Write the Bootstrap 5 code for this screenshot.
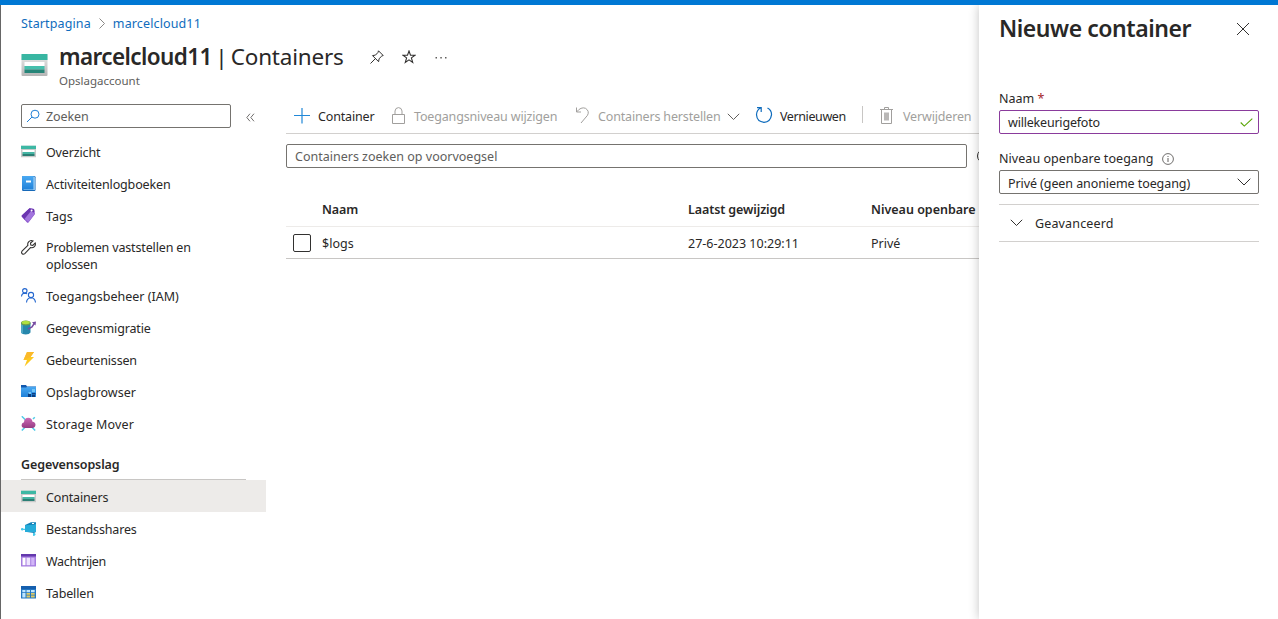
<!DOCTYPE html>
<html lang="nl">
<head>
<meta charset="utf-8">
<meta name="viewport" content="width=device-width, initial-scale=1">
<title>marcelcloud11 | Containers</title>
<link href="https://cdn.jsdelivr.net/npm/bootstrap@5.3.0/dist/css/bootstrap.min.css" rel="stylesheet">
<style>
  body { font-family: "Noto Sans", "Open Sans", sans-serif; font-size: 12.5px; line-height: 17px; color: #292827; height: 619px; overflow: hidden; white-space: nowrap; }
  .topbar { height: 5px; background: #0078d4; flex: none; }
  .blade { border-left: 1px solid #666; min-width: 0; }
  .crumbs { height: 37px; padding: 0 0 0 20px; gap: 8px; letter-spacing: .13px; }
  .crumbs a { color: #0f6cbd; text-decoration: none; }
  .titlebar { height: 50px; padding-left: 20px; }
  .titlebar h1 { font-size: 22.5px; line-height: 30px; font-weight: 400; margin: 0; letter-spacing: -.2px; word-spacing: -2.3px; }
  .titlebar h1 b { font-weight: 600; letter-spacing: -.6px; }
  .subtitle { font-size: 11.5px; line-height: 15px; color: #605e5c; margin-top: 1px; }
  .sidebar { width: 265px; flex: none; letter-spacing: -.15px; }
  .search-box { border: 1px solid #75736f; border-radius: 2px; height: 24px; color: #605e5c; }
  .sidebar .search-box { width: 210px; gap: 5px; padding-left: 4px; letter-spacing: -.1px; }
  .side-item { height: 32px; padding-left: 20px; gap: 10px; }
  .side-item.tall { height: 48px; }
  .side-item svg { width: 15px; height: 15px; flex: none; margin-bottom: 1px; }
  .side-item.tall svg { margin-bottom: 18px; }
  .side-item.current { background: #edebe9; }
  .side-head ~ .side-item { padding-top: 2px; }
  .ls-wide { letter-spacing: .15px; }
  .ls-none { letter-spacing: 0; }
  .side-head { font-weight: 600; margin: 16px 20px 0; height: 24px; border-bottom: 1px solid #c8c6c4; letter-spacing: -.1px; }
  .toolbar { display: grid; grid-template-columns: 97px 185px 179px 107px 18px 120px; height: 35px; padding: 2px 0 1px 8px; margin-top: -5px; border-bottom: 1px solid #d2d0ce; letter-spacing: -.16px; }
  .tool { display: flex; align-items: center; }
  .tool svg { flex: none; }
  .off { color: #a19f9d; }
  .grid-row { display: grid; grid-template-columns: 36px 366px 183px 150px; align-items: center; }
  .grid-head { height: 34px; font-weight: 600; border-bottom: 1px solid #edebe9; margin-top: 25px; letter-spacing: -.1px; }
  .grid-line { height: 32px; border-bottom: 1px solid #c8c6c4; padding-top: 1px; }
  .tick { width: 18px; height: 18px; border: 1px solid #323130; border-radius: 2px; margin: -1px 0 0 7px; }
  .panel { width: 299px; flex: none; padding: 0 19px 0 20px; background: #fff; box-shadow: 0 0 10px rgba(0,0,0,.24); z-index: 2; clip-path: inset(0 0 0 -16px); }
  .panel h2 { font-size: 23px; font-weight: 600; line-height: 30px; margin: -1px 0 1px; letter-spacing: -.45px; }
  .field { height: 24px; border: 1px solid #75736f; border-radius: 2px; padding: 0 5px 0 8px; letter-spacing: -.08px; }
  .field.active { border-color: #8a3b9c; letter-spacing: -.2px; }
  .more { height: 38px; border-top: 1px solid #d2d0ce; border-bottom: 1px solid #d2d0ce; letter-spacing: .15px; }
</style>
</head>
<body class="d-flex flex-column">
<svg width="0" height="0" class="position-absolute" aria-hidden="true">
  <linearGradient id="gGrey" x1="0" x2="0" y1="0" y2="1"><stop offset="0" stop-color="#e9e9e9"/><stop offset="1" stop-color="#b5b5b5"/></linearGradient>
  <linearGradient id="gBlue" x1="0" x2="0" y1="0" y2="1"><stop offset="0" stop-color="#4aa9f2"/><stop offset="1" stop-color="#1f80d8"/></linearGradient>
  <linearGradient id="gPink" x1="0" x2="0" y1="0" y2="1"><stop offset="0" stop-color="#cc6bb5"/><stop offset="1" stop-color="#963d83"/></linearGradient>
  <symbol id="storage" viewBox="0 0 26 22"><path d="M0 1h26v20q0 1-1 1H1q-1 0-1-1z" fill="url(#gGrey)"/><path d="M0 0h26v6H0z" fill="#38b6a2"/><path d="M3 8h20v4H3z" fill="#fff"/><path d="M3 12h20v3.500H3z" fill="#45bfac"/><path d="M3 15.500h20V19H3z" fill="#268578"/></symbol>
  <symbol id="storage-sm" viewBox="0 0 15 12"><path d="M0 0h15v12H0z" fill="#c9c9c9"/><path d="M0 0h15v3.500H0z" fill="#3db8a4"/><path d="M1.500 4.500h12V7h-12z" fill="#fff"/><path d="M1.500 6.500h12v2h-12z" fill="#45b5a4"/><path d="M1.500 8.500h12v2h-12z" fill="#2b7f75"/></symbol>
</svg>
<div class="topbar"></div>
<div class="d-flex flex-grow-1">
  <div class="blade flex-grow-1 overflow-hidden">
    <nav class="crumbs d-flex align-items-center"><a href="#">Startpagina</a>
      <svg width="6" height="11" viewBox="0 0 6 11" fill="none" stroke="#8a8886"><path d="M.5.5l5 5-5 5"/></svg>
      <a href="#">marcelcloud11</a></nav>
    <header class="titlebar d-flex">
      <svg width="27" height="22" style="margin-top:12px"><use href="#storage"/></svg>
      <div style="margin-left:11px">
        <div class="d-flex align-items-center">
          <h1><b>marcelcloud11</b> | Containers</h1>
          <svg style="margin-left:26px" width="14" height="14" viewBox="0 0 14 14" fill="none" stroke="#323130"><path d="M8.500.8l4.700 4.700-1.400.5-2.700 2.700-.5 3L2.500 5.600l3-.5L8 2.400zM5.300 8.700L.5 13.500"/></svg>
          <svg style="margin-left:18px" width="14" height="14" viewBox="0 0 14 14" fill="none" stroke="#323130" stroke-width="1.100"><path d="M7 1l1.500 4.200H13L9.400 7.900l1.300 4.500L7 9.800l-3.700 2.600 1.300-4.500L1 5.200h4.500z"/></svg>
          <svg style="margin-left:19px" width="12" height="3" viewBox="0 0 12 3" fill="#605e5c"><path d="M.5 1H2v1.500H.5zM5.300 1h1.500v1.500H5.300zM10 1h1.500v1.500H10z"/></svg>
        </div>
        <div class="subtitle">Opslagaccount</div>
      </div>
    </header>
    <div class="d-flex" style="padding-top:12px">
      <aside class="sidebar">
        <div class="d-flex align-items-center" style="padding-left:20px;margin-bottom:8px">
          <div class="search-box d-flex align-items-center"><svg width="15" height="14" viewBox="0 0 15 14" fill="none" stroke="#1f7fd6"><circle cx="9" cy="5.200" r="4"/><path d="M6 8L1 13"/></svg><span>Zoeken</span></div>
          <svg style="margin:2px 0 0 15px" width="9" height="9" viewBox="0 0 9 9" fill="none" stroke="#605e5c" stroke-width=".9"><path d="M4 .7L.8 4.500 4 8.300M8 .7L4.800 4.500 8 8.300"/></svg>
        </div>
        <div class="side-item d-flex align-items-center"><svg viewBox="0 0 15 15"><use href="#storage-sm" y="1.500" width="15" height="12"/></svg><span>Overzicht</span></div>
        <div class="side-item d-flex align-items-center"><svg viewBox="0 0 15 15"><rect x="1" y="0" width="13.500" height="15" rx="1.200" fill="#1769b8"/><rect x="2.500" y=".6" width="11.300" height="13.400" fill="#a9d6f8"/><path d="M1 1.200Q1 0 2.200 0H12.500v13.500H2Q1 13.500 1 14z" fill="url(#gBlue)"/><path d="M5 4.500h5v2H5z" fill="#fff"/></svg><span>Activiteitenlogboeken</span></div>
        <div class="side-item d-flex align-items-center"><svg viewBox="0 0 15 15"><path d="M8.500.3L13 1l1 5-6.500 8.400q-.8.7-1.500 0L.9 8.700q-.6-.9.1-1.500z" fill="#8a55cc"/><path d="M8.500.3L13 1l.5 2.500L4 12 .9 8.700q-.6-.9.1-1.500z" fill="#6b35b0"/><path d="M10 3l3.800 2.400L7.500 14 3.500 11z" fill="#a275dd"/><circle cx="10.600" cy="2.500" r="1" fill="#fff"/></svg><span class="ls-none">Tags</span></div>
        <div class="side-item tall d-flex align-items-center"><svg viewBox="0 0 15 15" fill="none" stroke="#323130" stroke-width="1.100"><path d="M12 .9Q9.500-.1 7.600 1.800 6.300 3.300 6.900 5.300L1 11.200q-1 1.500.2 2.600 1.300.9 2.600-.2l5.700-6q2.300.6 3.900-1 1.500-1.700.8-3.700l-2.400 2.400-2-.3-.3-2z"/></svg><span>Problemen vaststellen en<br>oplossen</span></div>
        <div class="side-item d-flex align-items-center"><svg viewBox="0 0 15 15" fill="none" stroke="#2467cf" stroke-width="1.100"><circle cx="3.800" cy="2.800" r="2.200"/><path d="M.5 8.500Q.7 5.200 3.800 5.100q1.500 0 2.300.9"/><circle cx="10" cy="7" r="2.600"/><path d="M5.500 14.500Q5.800 10 10 9.800q4 .2 4.500 4.700"/></svg><span class="ls-none">Toegangsbeheer (IAM)</span></div>
        <div class="side-item d-flex align-items-center"><svg viewBox="0 0 15 15"><path d="M0 2.800v9.700q1 2 4.700 2t4.800-2V2.800z" fill="#2687ac"/><path d="M0 2.800v9.700q.6 1 2 1.500V3z" fill="#4fa6c4"/><ellipse cx="4.800" cy="2.900" rx="4.800" ry="2.500" fill="#6d9a4a"/><ellipse cx="4.800" cy="2.500" rx="4" ry="1.700" fill="#b0e040"/><path d="M7 9l4-2 2.500-4" fill="none" stroke="#764ba2" stroke-width="1.500"/><path d="M11 2.300l4-.9-.5 4z" fill="#764ba2"/></svg><span>Gegevensmigratie</span></div>
        <div class="side-item d-flex align-items-center"><svg viewBox="0 0 15 15"><path d="M6 0h7L9.500 5H13L3.500 14.500 6 8H2.500z" fill="#fcc81f"/><path d="M6 0h7L9.500 5 2.500 8z" fill="#fbb92a"/></svg><span>Gebeurtenissen</span></div>
        <div class="side-item d-flex align-items-center"><svg viewBox="0 0 15 15"><path d="M0 1h5l1 1.500h9V13H0z" fill="#1258ad"/><path d="M0 3.500h5L6.500 2.700H15V13H0z" fill="url(#gBlue)"/><path d="M7 9h3v4H7zM11 9h3.500v1.500H11zM11 11h3v2h-3z" fill="#0c3f82"/><path d="M11 5h3v3h-3zM7.500 8H10v2H7.500z" fill="#70c4f8"/></svg><span style="letter-spacing:.06px">Opslagbrowser</span></div>
        <div class="side-item d-flex align-items-center"><svg viewBox="0 0 15 15"><path d="M.8.3l4 4M14.200 14.500l-4-4M.8 14.500l4-4M12 3l1.800-1.800" stroke="#50cbe8" stroke-width="1.500"/><path d="M3.700 12Q.5 11.800.6 9 .7 6.600 3 6.200 3.300 2 7.300 1.800q3.500 0 4.200 3.900 3 .4 3 3.100-.1 3-3.200 3.200z" fill="url(#gPink)"/></svg><span class="ls-wide">Storage Mover</span></div>
        <div class="side-head">Gegevensopslag</div>
        <div class="side-item current d-flex align-items-center"><svg viewBox="0 0 15 15"><use href="#storage-sm" y="1.500" width="15" height="12"/></svg><span>Containers</span></div>
        <div class="side-item d-flex align-items-center"><svg viewBox="0 0 15 15"><path d="M0 8.300h4M12.800 12v3" stroke="#45c9ea" stroke-width="1.300"/><circle cx="1.200" cy="8.300" r="1.200" fill="#45c9ea"/><circle cx="13.200" cy="13.200" r="1.200" fill="#45c9ea"/><path d="M4 4l6-2.800h5V11l-2 1-9-1.200z" fill="#1683b8"/><path d="M4 4.200l9-.4L15 3v8H4z" fill="#26acd9"/><path d="M11 2h2v1h-2z" fill="#fff"/></svg><span>Bestandsshares</span></div>
        <div class="side-item d-flex align-items-center"><svg viewBox="0 0 15 15"><path d="M0 1.500h15V13q0 .5-.5.5H.5Q0 13.500 0 13z" fill="#a67de0"/><path d="M0 1h15v2.500H0z" fill="#6338ad"/><path d="M1.500 4.700h3v7.500h-3z" fill="#fff"/><path d="M5.500 4.700h3.700v7.500H5.500z" fill="#efe5ff"/><path d="M10.200 4.700h3.300v7.500h-3.300z" fill="#d2b6f8"/></svg><span style="letter-spacing:-.3px">Wachtrijen</span></div>
        <div class="side-item d-flex align-items-center"><svg viewBox="0 0 15 15"><path d="M0 1.500h15V13q0 .5-.5.5H.5Q0 13.500 0 13z" fill="#2376c2"/><path d="M0 1h15v3H0z" fill="#155fae"/><path d="M1.300 5h3.200v2.200H1.300zM5.500 5h3.500v2.200H5.500zM10 5h3.700v2.200H10zM1.300 8h3.200v4.500H1.300z" fill="#bfe6ff"/><path d="M5.500 8h3.500v1.800H5.500zM10 8h3.700v1.800H10zM5.500 10.600h3.500v1.900H5.500zM10 10.600h3.700v1.900H10z" fill="#dfc964"/></svg><span>Tabellen</span></div>
      </aside>
      <main style="padding-left:20px">
        <div class="toolbar">
          <div class="tool"><svg style="margin:0 8px 2px 0" width="16" height="16" viewBox="0 0 16 16" fill="none" stroke="#2188d8" stroke-width="1.200"><path d="M8 0v15.500M0 7.500h16"/></svg>Container</div>
          <div class="tool off"><svg style="margin:0 9px 3px 1px" width="13" height="17" viewBox="0 0 13 17" fill="none" stroke="#a19f9d"><path d="M.5 7.500h12v9H.5zM3 7.500V4q.3-3.300 3.500-3.400Q9.700.7 10 4v3.500"/></svg>Toegangsniveau wijzigen</div>
          <div class="tool off"><svg style="margin:0 9px 3px 0" width="13" height="17" viewBox="0 0 13 17" fill="none" stroke="#a19f9d"><path d="M.5.5v4.500H5M.5 5Q5-.5 9.500 1.300q4.300 2.800 2 7L5 16"/></svg><span>Containers herstellen</span><svg style="margin-left:7px" width="13" height="8" viewBox="0 0 13 8" fill="none" stroke="#605e5c"><path d="M.8.8l5.700 5.700L12.200.8"/></svg></div>
          <div class="tool" style="letter-spacing:-.4px"><svg style="margin:0 7px 4px 0" width="18" height="18" viewBox="0 0 18 18" fill="none" stroke="#0f6cbd" stroke-width="1.200"><path d="M12.500 2q4.300 2.300 4 6.800-1 7-7.500 7.500-7-.5-7.500-7.500Q1.600 4 5.500 2M2 1.600h4.200V6"/></svg>Vernieuwen</div>
          <div class="tool"><span style="width:1px;height:17px;background:#c8c6c4;margin-bottom:4px"></span></div>
          <div class="tool off"><svg style="margin:0 10px 3px 0" width="13" height="17" viewBox="0 0 13 17" fill="none" stroke="#a19f9d"><path d="M0 2.500h13M4.500 2.500v-2h4v2M1.500 3v13.500h10V3"/><path d="M4 5.500h5v8H4z" fill="#a19f9d" stroke="none" opacity=".75"/></svg>Verwijderen</div>
        </div>
        <div class="d-flex align-items-center" style="margin-top:10px">
          <div class="search-box d-flex align-items-center ps-2" style="width:681px;flex:none">Containers zoeken op voorvoegsel</div>
          <svg style="margin-left:10px;flex:none" width="14" height="14" viewBox="0 0 14 14" fill="none" stroke="#323130"><circle cx="7" cy="7" r="6.500"/></svg>
        </div>
        <div class="grid-row grid-head"><span></span><span>Naam</span><span>Laatst gewijzigd</span><span style="letter-spacing:0">Niveau openbare</span></div>
        <div class="grid-row grid-line"><span class="tick"></span><span>$logs</span><span>27-6-2023 10:29:11</span><span>Privé</span></div>
      </main>
    </div>
  </div>
  <section class="panel">
    <div class="d-flex justify-content-between align-items-center" style="padding:9px 9px 0 0"><h2>Nieuwe container</h2><svg width="14" height="14" viewBox="0 0 14 14" stroke="#323130"><path d="M1 1l12 12M13 1L1 13"/></svg></div>
    <div style="margin-top:46px;height:20px">Naam <span style="color:#a4262c">*</span></div>
    <div class="field active d-flex align-items-center justify-content-between"><span>willekeurigefoto</span><svg width="13" height="9" viewBox="0 0 13 9" fill="none" stroke="#57a300" stroke-width="1.100"><path d="M.7 4.500l3.600 3.600L12.300.7"/></svg></div>
    <div class="d-flex align-items-center" style="margin-top:16px;height:17px;margin-bottom:3px;letter-spacing:.05px">Niveau openbare toegang<svg style="margin-left:9px" width="12" height="12" viewBox="0 0 12 12" fill="none" stroke="#605e5c"><circle cx="6" cy="6" r="5.400" stroke-width=".9"/><path d="M6 5v4M6 3v1"/></svg></div>
    <div class="field d-flex align-items-center justify-content-between"><span class="pt-1" style="margin-top:-2px">Privé (geen anonieme toegang)</span><svg style="margin-right:2px" width="14" height="8" viewBox="0 0 14 8" fill="none" stroke="#323130"><path d="M.7.7L7 7 13.300.7"/></svg></div>
    <div class="more d-flex align-items-center" style="margin-top:10px;padding-left:11px"><svg width="13" height="8" viewBox="0 0 13 8" fill="none" stroke="#323130"><path d="M.8.8l5.700 5.700L12.200.8"/></svg><span style="margin-left:12px">Geavanceerd</span></div>
  </section>
</div>
<script src="https://cdn.jsdelivr.net/npm/bootstrap@5.3.0/dist/js/bootstrap.bundle.min.js"></script>
</body>
</html>
